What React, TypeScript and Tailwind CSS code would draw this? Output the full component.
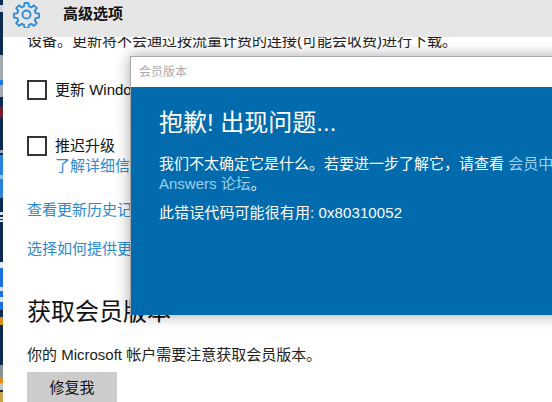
const cjk = "font-['Liberation_Sans','Noto_Sans_CJK_SC',sans-serif]";

// sliver of desktop wallpaper left of the settings window: [y, height, colour]
const wallpaper: [number, number, string][] = [
  [0, 402, '#0b2b52'],
  [5, 7, '#cdd6e2'],
  [55, 42, '#a4a9b0'],
  [80, 5, '#1f78dc'],
  [107, 11, '#7a1a2c'],
  [150, 3, '#8fa6c0'],
  [155, 43, '#2a82dc'],
  [175, 4, '#8cc0ec'],
  [212, 3, '#d7dfe8'],
  [217, 2, '#d7dfe8'],
  [220, 2, '#d7dfe8'],
  [262, 6, '#dfe8f4'],
  [268, 42, '#1c6fe0'],
  [287, 4, '#cfe0f5'],
  [297, 5, '#cfe0f5'],
  [317, 8, '#d98a20'],
  [365, 12, '#8a8f96'],
  [377, 6, '#e08a1c'],
  [383, 7, '#c4c4bc'],
  [392, 10, '#c9a24a'],
];

function Check({ label }: { label: string }) {
  return (
    <div className="flex items-center gap-2">
      <div className="w-5 h-5 border-2 border-[#333]" />
      <span className="text-[15px] leading-5 text-[#111] whitespace-nowrap">{label}</span>
    </div>
  );
}

export default function App() {
  return (
    <div className={`relative flex w-[552px] h-[402px] overflow-hidden bg-white ${cjk}`}>
      <svg width="3" height="402" viewBox="0 0 3 402" className="shrink-0">
        {wallpaper.map(([y, h, c]) => <rect key={y} x="0" y={y} width="3" height={h} fill={c} />)}
      </svg>

      <div className="flex-1 min-w-0 flex flex-col">
        <header className="relative z-10 h-[37px] shrink-0 flex items-start bg-[#e6e6e6] pl-[10px] pt-px">
          <svg width="27" height="27" viewBox="0 0 24 24" fill="none" stroke="#2f8fdc" strokeWidth="1.7" strokeLinejoin="round">
            <circle cx="12" cy="12" r="3.6" />
            <path d="M10.3 1.8h3.4l.5 3 2 .85 2.5-1.75 2.4 2.4-1.75 2.5.85 2 3 .5v3.4l-3 .5-.85 2 1.75 2.5-2.4 2.4-2.5-1.75-2 .85-.5 3h-3.4l-.5-3-2-.85-2.5 1.75-2.4-2.4 1.75-2.5-.85-2-3-.5v-3.4l3-.5.85-2-1.75-2.5 2.4-2.4 2.5 1.75 2-.85z" />
          </svg>
          <h1 className="ml-[23px] mt-[3px] text-[15px] leading-5 font-bold text-[#111]">高级选项</h1>
        </header>

        <main className="flex-1 min-h-0 pl-6 flex flex-col items-start">
          <p className="-mt-[6px] text-[15px] leading-5 text-[#222] whitespace-nowrap">
            设备。更新将不会通过按流量计费的连接(可能会收费)进行下载。
          </p>
          <div className="mt-[29px]"><Check label="更新 Windows 时提供其他更新" /></div>
          <div className="mt-9"><Check label="推迟升级" /></div>
          <a className="ml-7 text-[15px] leading-5 text-[#2b8ad0] whitespace-nowrap">了解详细信息</a>
          <a className="mt-6 text-[15px] leading-5 text-[#2b8ad0] whitespace-nowrap">查看更新历史记录</a>
          <a className="mt-[19px] text-[15px] leading-5 text-[#2b8ad0] whitespace-nowrap">选择如何提供更新</a>
          <h2 className="mt-[39px] text-2xl leading-7 text-[#111] whitespace-nowrap">获取会员版本</h2>
          <p className="mt-[19px] text-[15px] leading-5 text-[#222] whitespace-nowrap">你的 Microsoft 帐户需要注意获取会员版本。</p>
          <button className="mt-[7px] w-[90px] h-8 shrink-0 bg-[#cccccc] text-[15px] text-[#111]">修复我</button>
        </main>
      </div>

      {/* dialog on top of the settings page */}
      <div className="absolute z-20 left-[130px] top-[56px] w-[440px] h-[259px] flex flex-col border-t border-l border-[#aaa] bg-white shadow-[0_0_14px_rgba(0,0,0,0.35)]">
        <div className="h-[30px] shrink-0 flex items-center pl-2 text-xs text-[#aaa]">会员版本</div>
        <div className="flex-1 bg-[#016bad] pl-7 text-white">
          <h3 className="mt-[20px] text-2xl leading-8 whitespace-nowrap">抱歉! 出现问题...</h3>
          <p className="mt-[15px] text-[15px] leading-5 whitespace-nowrap">
            我们不太确定它是什么。若要进一步了解它，请查看 <span className="text-[#9ad0f0]">会员中心或</span>
            <br />
            <span className="text-[#9ad0f0]">Answers 论坛</span>。
          </p>
          <p className="mt-[9px] text-[15px] leading-5 tracking-[0.1px] whitespace-nowrap">此错误代码可能很有用: 0x80310052</p>
        </div>
      </div>
    </div>
  );
}
